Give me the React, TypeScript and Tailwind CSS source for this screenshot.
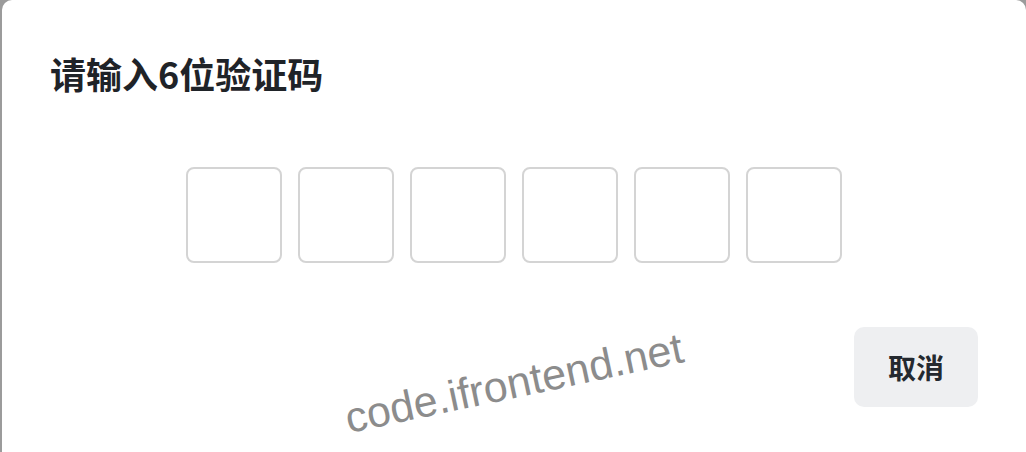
import { useState } from "react";

const CJK = "font-['PingFang_SC','Noto_Sans_CJK_SC',sans-serif]";

export default function App() {
  const [code, setCode] = useState<string[]>(["", "", "", "", "", ""]);

  return (
    <div className="h-[452px] w-[1026px] overflow-hidden bg-[#9b9b9b] pl-[2px]">
      <div className="relative h-[460px] w-[1024px] rounded-t-[10px] bg-white px-12 pt-[55px]">
        <h2 className={`${CJK} text-[36px] leading-none font-bold text-[#1f2328]`}>请输入6位验证码</h2>

        <div className="mt-[76px] flex justify-center gap-4">
          {code.map((v, i) => (
            <input
              key={i}
              value={v}
              maxLength={1}
              onChange={e => setCode(prev => prev.map((c, j) => (j === i ? e.target.value : c)))}
              className="h-24 w-24 rounded-[8px] border-2 border-[#d4d4d4] text-center text-[40px] outline-none"
            />
          ))}
        </div>

        <div className="mt-16 flex justify-end">
          <button className={`${CJK} h-20 w-[124px] rounded-[10px] bg-[#eeeff1] text-[28px] font-bold text-[#24292f]`}>
            取消
          </button>
        </div>

        {/* watermark */}
        <div className="pointer-events-none absolute left-[512px] top-[383px] -translate-x-1/2 -translate-y-1/2 -rotate-12 whitespace-nowrap font-['Liberation_Sans',Arial,sans-serif] text-[43px] text-[#8c8c8c]">
          code.ifrontend.net
        </div>
      </div>
    </div>
  );
}
